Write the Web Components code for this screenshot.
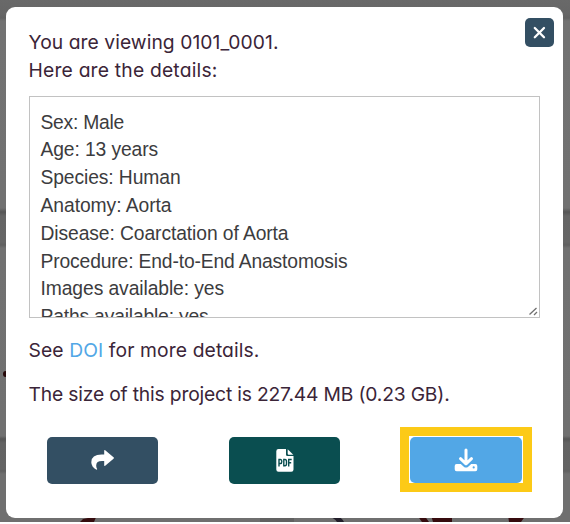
<!DOCTYPE html>
<html lang="en">
<head>
<meta charset="utf-8">
<title>Project details</title>
<style>
html,body{margin:0;width:570px;height:524px;overflow:hidden;background:#fff}
</style>
</head>
<body>
<project-page></project-page>
<script>
const define = (name, html, after) => {
  const t = document.createElement('template');
  t.innerHTML = html;
  customElements.define(name, class extends HTMLElement {
    constructor() {
      super();
      this.attachShadow({ mode: 'open' }).append(t.content.cloneNode(true));
    }
    connectedCallback() { if (after) after(this); }
  });
};

/* A line of text tracked so that its advance equals the width attribute */
define('text-line', `<style>
:host{display:block;white-space:nowrap}
span{display:inline-block}
</style><span><slot></slot></span>`, el => {
  const span = el.shadowRoot.querySelector('span');
  const want = +el.getAttribute('width');
  const n = el.textContent.length;
  span.style.letterSpacing = (want - span.getBoundingClientRect().width) / n + 'px';
});

define('page-backdrop', `<style>
:host{display:block;height:522px;background:linear-gradient(#696969 0,#666 14px,#626262 18px,#727272 21px,#717171 208px,#555 212px,#656565 216px,#666 242px,#606060 245px,#717171 248px,#707070 436px,#555 439px,#636363 443px,#646464 469px,#606060 471px,#6f6f6f 474px)}
svg{display:block}
</style>
<svg width="570" height="522" viewBox="0 0 570 522">
<ellipse cx="5.5" cy="374" rx="2.5" ry="3" fill="#260708"/>
<path d="M80 522l3-3 5-1 1-3h8l-3 7z" fill="#350c0e"/>
<path d="M260 515h34v7h-34z" fill="#616161"/>
<path d="M325 515h9q8 2 10 7h-7q-2-4-12-7z" fill="#211d29"/>
<path d="M417 515h7l5 7h-7zM431 515h21v7h-19zM508 515h18l-5 7h-12z" fill="#360b0e"/>
</svg>`);

define('close-button', `<style>
:host{display:block;width:29px;height:29px;border-radius:5px;background:#334f63}
svg{display:block}
</style>
<svg width="29" height="29" viewBox="0 0 29 29"><path d="M9.8 10l9.2 9.3M19 10l-9.2 9.3" stroke="#fff" stroke-width="2.3" stroke-linecap="round"/></svg>`);

define('details-box', `<style>
:host{display:block;box-sizing:border-box;width:511.500px;height:222px;border:1px solid #c2c2c2;overflow:hidden;padding:11.6px 11px;position:relative;font:19.3px/27.8px "Liberation Sans",Arial,sans-serif;color:#3c3c3e}
svg{position:absolute;right:0;bottom:0}
</style><slot></slot>
<svg width="11" height="11" viewBox="0 0 11 11"><path d="M1.5 8.5l7-6.5M6 9l3-3" stroke="#707070" stroke-width="1.3"/></svg>`);

define('action-button', `<style>
:host{display:grid;place-items:center;width:111px;height:47px;border-radius:5px;background:var(--fill)}
</style><slot></slot>`);

define('highlight-frame', `<style>
:host{display:block;box-sizing:border-box;width:132px;height:65px;border:9px solid #fcca17;padding:1px 1px 0;background:#fff}
</style><slot></slot>`);

define('detail-dialog', `<style>
:host{display:block;position:absolute;left:6px;top:7px;box-sizing:border-box;width:557px;height:510.5px;border-radius:9px;background:#fff;padding:22px 9px 0 22.5px;font:19.3px/27.8px Inter,"Open Sans",sans-serif;font-feature-settings:"cv11";color:#3b2538}
header{display:flex;justify-content:space-between;align-items:flex-start;height:67px}
close-button{margin-top:-11px}
.doi{margin-top:19px}
.size{margin-top:16.5px}
a{color:#52a7e6;text-decoration:none}
footer{display:flex;align-items:flex-start;margin:18px 0 0 18.5px}
.pdf{margin-left:71px}
highlight-frame{margin:0 0 0 60px}
action-button{margin-top:9.7px}
highlight-frame action-button{margin-top:0;width:112px;height:46px}
svg{display:block}
</style>
<header>
 <div><text-line width="250">You are viewing 0101_0001.</text-line><text-line width="189">Here are the details:</text-line></div>
 <close-button></close-button>
</header>
<details-box>
 <text-line width="83.5">Sex: Male</text-line>
 <text-line width="117.5">Age: 13 years</text-line>
 <text-line width="140">Species: Human</text-line>
 <text-line width="131">Anatomy: Aorta</text-line>
 <text-line width="248">Disease: Coarctation of Aorta</text-line>
 <text-line width="307">Procedure: End-to-End Anastomosis</text-line>
 <text-line width="183.5">Images available: yes</text-line>
 <text-line width="168">Paths available: yes</text-line>
</details-box>
<text-line class="doi" width="231">See <a>DOI</a> for more details.</text-line>
<text-line class="size" width="421">The size of this project is 227.44 MB (0.23 GB).</text-line>
<footer>
 <action-button style="--fill:#334f63"><svg width="23" height="20" viewBox="0 0 23 20"><path d="M13.2.8q0-1.2 1-.5l8.3 7q.9.7 0 1.4l-8.3 7.1q-1 .7-1-.5v-4.2H11q-5.800 0-5.800 4.400 0 2 .8 3.300.5.900-.5.900Q.3 16.800.3 12.200.3 4.500 10.700 4.500h2.500z" fill="#fff"/></svg></action-button>
 <action-button class="pdf" style="--fill:#0a4e50"><svg width="18" height="23" viewBox="0 0 18 23"><path d="M2.500 0H10v5.500q0 1.500 1.500 1.500H17.500v13.500q0 2.200-2.200 2.200H2.500Q.3 22.700.3 20.500V2.200Q.3 0 2.500 0z" fill="#fff"/><path d="M11.700.3l5.600 5.400h-4.600q-1 0-1-1z" fill="#fff"/><path d="M3 17.500v-7h1.500q1.300 0 1.300 2t-1.300 2H3M7.800 10.500v6.300H9q1.500 0 1.500-2v-2.300q0-2-1.500-2zM12.700 17.500v-7h3M12.700 13.800h2.500" fill="none" stroke="#0a4e50" stroke-width="1.400"/></svg></action-button>
 <highlight-frame><action-button style="--fill:#52a7e6"><svg width="24" height="24" viewBox="0 0 24 24"><path d="M12 2v13M6.500 10.700L12 15.800l5.500-5.100" fill="none" stroke="#fff" stroke-width="3" stroke-linecap="round" stroke-linejoin="round"/><path d="M2.600 16h4.200l3 2.700q2.200 1.700 4.400 0l3-2.700h4.200q1.900 0 1.900 1.900v3.400q0 1.900-1.900 1.900H2.600Q.7 23.200.7 21.300v-3.400Q.7 16 2.600 16z" fill="#fff"/><circle cx="19.700" cy="19.400" r="1.100" fill="#52a7e6"/></svg></action-button></highlight-frame>
</footer>`);

define('project-page', `<style>
:host{display:block;position:relative;width:570px;height:524px}
</style><page-backdrop></page-backdrop><detail-dialog></detail-dialog>`);
</script>
</body>
</html>
